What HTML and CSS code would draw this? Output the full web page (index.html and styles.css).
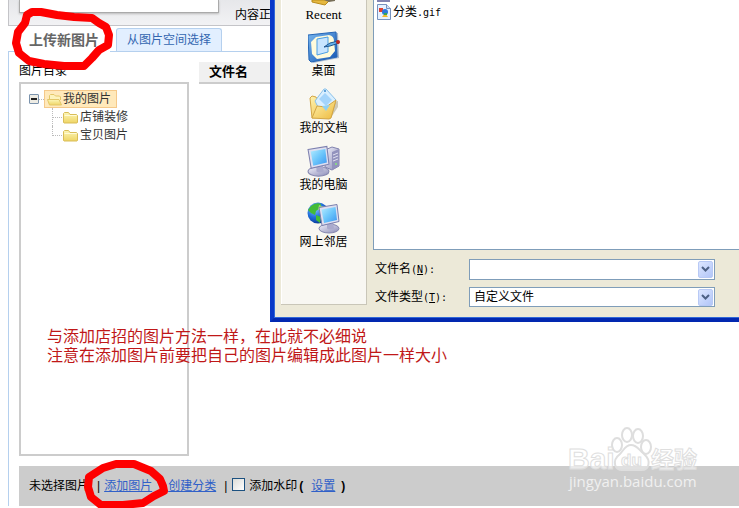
FILE: index.html
```html
<!DOCTYPE html>
<html lang="zh-CN">
<head>
<meta charset="utf-8">
<title>上传新图片</title>
<link rel="stylesheet" href="styles.css">
</head>
<body>
<svg class="defs" width="0" height="0" aria-hidden="true">
  <defs>
    <linearGradient id="folderFill" x1="0" y1="0" x2="0" y2="1"><stop offset="0" stop-color="#fcf6b8"/><stop offset="1" stop-color="#efd565"/></linearGradient>
    <linearGradient id="screenFill" x1="0" y1="0" x2="1" y2="1"><stop offset="0" stop-color="#b5ecff"/><stop offset=".5" stop-color="#6cc6fb"/><stop offset="1" stop-color="#3c96f0"/></linearGradient>
    <linearGradient id="metalFill" x1="0" y1="0" x2="1" y2="1"><stop offset="0" stop-color="#f1f1fa"/><stop offset="1" stop-color="#8b8bb8"/></linearGradient>
    <linearGradient id="goldFill" x1="0" y1="0" x2="1" y2="1"><stop offset="0" stop-color="#fff3b0"/><stop offset="1" stop-color="#edb93c"/></linearGradient>
    <linearGradient id="deskFill" x1="0" y1="0" x2="1" y2="1"><stop offset="0" stop-color="#78b6ee"/><stop offset="1" stop-color="#1456b4"/></linearGradient>
    <radialGradient id="globeFill" cx=".35" cy=".3" r=".8"><stop offset="0" stop-color="#8ac8ff"/><stop offset=".5" stop-color="#2170dc"/><stop offset="1" stop-color="#052f8c"/></radialGradient>
    <symbol id="folder" viewBox="0 0 15 13"><path d="M.5 11.5v-9l1-1h4l1.500 2h6.500l1 1v7l-.5.5H1z" fill="url(#folderFill)" stroke="#d9bd58"/><path d="M1.500 4.500h12" stroke="#fffbd8"/></symbol>
    <symbol id="folderOpen" viewBox="0 0 15 13"><path d="M2.500 11V2.500l1-1h3.500l1.500 1.500h4l1 1V7" fill="#fdf3bd" stroke="#e3c768"/><path d="M.5 6.500h11.500l2.500 5.500H2.500z" fill="url(#folderFill)" stroke="#e3c768"/></symbol>
    <symbol id="monitor" viewBox="0 0 22 30"><ellipse cx="11" cy="25" rx="10" ry="4.500" fill="url(#metalFill)" stroke="#8587b0"/><path d="M9 18l6-1 1 8q-4 2-7 0z" fill="#aaaacd"/><path d="M1 4l18-3 2 17-17 4z" fill="#dedff0" stroke="#7c7fae"/><path d="M3.500 6l14-2.500 1.500 13-13 3z" fill="url(#screenFill)"/></symbol>
  </defs>
</svg>

<div class="page">
  <header class="top">
    <div class="preview"></div>
    <span class="top-text">内容正</span>
  </header>

  <nav class="tabs">
    <a class="tab active" href="#upload">上传新图片</a>
    <a class="tab" href="#space">从图片空间选择</a>
  </nav>

  <main class="panel" id="upload">
    <div class="columns">
      <section class="catalog">
        <h2 class="catalog-title">图片目录</h2>
        <div class="tree">
          <div class="tree-row">
            <button class="toggle" type="button" aria-label="收起"></button>
            <span class="dots"></span>
            <a class="node selected" href="#all"><svg width="15" height="13"><use href="#folderOpen"/></svg>我的图片</a>
          </div>
          <ul class="children">
            <li><span class="branch"></span><a class="node" href="#shop"><svg width="15" height="13"><use href="#folder"/></svg>店铺装修</a></li>
            <li><span class="branch"></span><a class="node" href="#item"><svg width="15" height="13"><use href="#folder"/></svg>宝贝图片</a></li>
          </ul>
        </div>
      </section>
      <table class="files">
        <thead><tr><th>文件名</th></tr></thead>
      </table>
    </div>

    <footer class="actions">
      <span class="status">未选择图片</span>
      <span>|</span>
      <a class="add" href="#add">添加图片</a>
      <a class="create" href="#create">创建分类</a>
      <span class="bar">|</span>
      <input type="checkbox" id="mark">
      <label for="mark">添加水印</label>
      <b>(</b>
      <a class="set" href="#set">设置</a>
      <b>)</b>
      <svg class="watermark" width="140" height="70" viewBox="0 0 140 70">
        <g class="mark-shape">
          <ellipse cx="52" cy="19" rx="5" ry="7"/>
          <ellipse cx="62" cy="9" rx="5" ry="7"/>
          <ellipse cx="73" cy="10" rx="5" ry="7"/>
          <ellipse cx="81" cy="21" rx="5" ry="7"/>
          <path d="M66 19c-6 0-7 5-11 9-9 7-5 17 3 16h17c9 1 12-9 4-16-5-4-7-9-13-9z"/>
        </g>
        <text class="mark-logo" x="3" y="43">Bai</text>
        <text class="mark-du" x="56" y="40">du</text>
        <text class="mark-cn" x="86" y="42">经验</text>
        <text class="mark-url" x="4" y="61">jingyan.baidu.com</text>
      </svg>
    </footer>
  </main>

  <section class="dialog" aria-label="打开文件">
    <nav class="places">
      <a class="place" href="#recent">
        <svg width="32" height="6" viewBox="0 0 32 6"><path d="M4 0v2l13 3 5-5z" fill="#e5b83f" stroke="#b98b1b"/><path d="M16 0l5 2 6-1V0z" fill="#786f58"/></svg>
        <span class="latin">Recent</span>
      </a>
      <a class="place" href="#desktop">
        <svg width="32" height="32" viewBox="0 0 32 32"><path d="M2 5l28-3 1 25-26 5-2-2z" fill="#0d418e" opacity=".35"/><path d="M0 4l28-3 1 25-26 5-2-2z" fill="url(#deskFill)" stroke="#2666b6"/><path d="M8 6l13-2q5 1 5 6l1 10-5 6-13 2-5-5-1-12z" fill="#fffbdc"/><path d="M9 8l11-2v15l-11 3z" fill="#c8e5ff" stroke="#4b9fe4"/><path d="M16 16l6-4 8-2 1 2-9 3z" fill="#66b1ee" stroke="#20568f"/><circle cx="30" cy="11" r="2" fill="#bb2923"/></svg>
        <span>桌面</span>
      </a>
      <a class="place" href="#documents">
        <svg width="32" height="32" viewBox="0 0 32 32"><path d="M5 29l17 2 8-12v-6L14 16z" fill="#8f8460" opacity=".4"/><path d="M2 10l2-2 4 1 2 4 17 2-4 14-19 1z" fill="url(#goldFill)" stroke="#d3a645"/><path d="M7 13l9-12h2l10 11-8 9-10-2z" fill="#d9efff" stroke="#8ac1ea"/><path d="M11 11l6-6 7 7-6 6z" fill="#a3d4fb"/><circle cx="17" cy="3" r="1" fill="#3689cc"/><path d="M4 30l5-12 9 1 10-7-5 18-2 1z" fill="url(#goldFill)" stroke="#d3a645"/><path d="M14 18l8-1-4 6z" fill="#8fd0f2"/></svg>
        <span>我的文档</span>
      </a>
      <a class="place" href="#computer">
        <svg width="34" height="32" viewBox="0 0 34 32"><path d="M18 5l7-3 7 2v17l-7 4-7-3z" fill="url(#metalFill)" stroke="#8182ae"/><path d="M25 7l7-3v17l-7 4z" fill="#9292bd"/><path d="M26 10l5-2M26 13l5-2M26 16l5-2" stroke="#e0e0f0"/><circle cx="29" cy="19" r="1" fill="#86e876"/><use href="#monitor" x="0" y="0" width="23" height="32"/></svg>
        <span>我的电脑</span>
      </a>
      <a class="place" href="#network">
        <svg width="34" height="32" viewBox="0 0 34 32"><circle cx="11" cy="11" r="10.500" fill="url(#globeFill)"/><path d="M4 4q5-4 10-2l-1 4-4 3-1 4-4-2-3-3zM9 13l5 2-1 6-4-3z" fill="#43bb38"/><path d="M12 3l5 2-3 4-3-1z" fill="#a0e66a"/><use href="#monitor" x="11" y="1" width="22" height="31"/></svg>
        <span>网上邻居</span>
      </a>
    </nav>

    <div class="browser">
      <div class="list">
        <div class="cut"></div>
        <a class="file" href="#gif"><svg width="14" height="16" viewBox="0 0 14 16"><path d="M.5.500h9l4 4v11H.5z" fill="#e6f1ff" stroke="#7793bf"/><path d="M9.500.500v4h4" fill="#d1e0f5" stroke="#7793bf"/><path d="M2 4h4v4H2z" fill="#e34131"/><circle cx="8" cy="8" r="3" fill="#2c77dc"/><path d="M5 13l3-4 3 4z" fill="#f2b92c"/><path d="M7 9h3v2H7z" fill="#38a653"/></svg><span>分类<span class="mono">.gif</span></span></a>
      </div>
      <form class="fields">
        <label for="name">文件名<span class="mono">(<u>N</u>):</span></label>
        <div class="combo"><input id="name" type="text"><button class="arrow" type="button" aria-label="展开"><svg width="9" height="7" viewBox="0 0 9 7"><path d="M1 1l3.500 3.500L8 1" /></svg></button></div>
        <label for="type">文件类型<span class="mono">(<u>T</u>):</span></label>
        <div class="combo short"><select id="type"><option>自定义文件</option></select><span class="arrow"><svg width="9" height="7" viewBox="0 0 9 7"><path d="M1 1l3.500 3.500L8 1" /></svg></span></div>
      </form>
    </div>
  </section>

  <p class="note">与添加店招的图片方法一样，在此就不必细说<br>注意在添加图片前要把自己的图片编辑成此图片一样大小</p>

  <svg class="ring ring-tab" width="108" height="74" viewBox="0 0 108 74"><path d="M19 15L24 12 33 12 49 15 66 17 84 18 91 23 98 27 101 35 100 45 91 50 84 58 76 66 56 66 36 64 21 61 11 53 8 43 10 32 17 23z"/></svg>
  <svg class="ring ring-add" width="92" height="50" viewBox="0 0 92 50"><path d="M19 47L9 39 6 29 7 19 21 10 34 6 52 6 69 13 78 21 81 28 82 33 72 38 61 45 41 47z"/></svg>
</div>
</body>
</html>
```
FILE: styles.css
```css
* { box-sizing: border-box; }

body {
  margin: 0;
  background: #fff;
  color: #000;
  font: 12px/18px "Liberation Sans", "Noto Sans CJK SC", sans-serif;
}

a { color: inherit; text-decoration: none; }

.defs { position: absolute; }

.page { position: relative; padding-left: 8px; overflow: hidden; }

/* Upper strip */
.top {
  display: flex;
  gap: 16px;
  height: 26px;
  padding-left: 10px;
  border-left: 1px solid #c4c4c8;
  border-bottom: 1px solid #c4c4c8;
  background: linear-gradient(#e6e7ea, #f2f2f4);
}

.preview {
  width: 200px;
  height: 13px;
  background: #fff;
  border: 1px solid #aaa;
  border-top: 0;
  box-shadow: 0 1px 2px #bbb;
}

.top-text { padding-top: 6px; }

/* Tabs */
.tabs {
  display: flex;
  align-items: flex-end;
  gap: 6px;
  height: 26px;
  padding-left: 10px;
  border-bottom: 1px solid #b5d0ee;
}

.tab {
  height: 23px;
  padding: 0 10px;
  border: 1px solid #b5d0ee;
  border-bottom: 0;
  border-radius: 3px 3px 0 0;
  background: #e2efff;
  color: #3366b0;
  line-height: 23px;
}

.tab.active {
  height: 24px;
  margin-bottom: -1px;
  border-color: #fff;
  background: #fff;
  color: #666;
  font-size: 14px;
  font-weight: bold;
}

/* Catalog and files */
.panel {
  padding: 10px 0 0 10px;
  margin-bottom: 2px;
  border-left: 1px solid #b5d0ee;
}

.columns { display: flex; align-items: flex-start; gap: 10px; }

.catalog { width: 170px; }

.catalog-title { margin: 0 0 2px; font-size: 12px; font-weight: normal; }

.tree {
  height: 374px;
  padding: 6px 8px;
  border: 2px solid #ccc;
  color: #333;
}

.tree-row { display: flex; align-items: center; }

.toggle {
  width: 10px;
  height: 10px;
  padding: 0;
  border: 1px solid #7b93ad;
  border-radius: 1px;
  background: linear-gradient(#222, #222) center / 6px 2px no-repeat, #eeece4;
}

.dots { width: 5px; border-top: 1px dotted #bbb; }

.node { display: flex; align-items: center; gap: 2px; height: 18px; }

.node.selected {
  gap: 1px;
  padding: 0 5px 0 2px;
  border: 1px solid #f5c98a;
  background: #ffe9bb;
}

.children { margin: 0; padding: 0 0 0 23px; list-style: none; }

.children li { display: flex; }

.branch {
  width: 11px;
  height: 18px;
  border-left: 1px dotted #bbb;
  background: linear-gradient(90deg, #bbb 50%, transparent 50%) left center / 2px 1px repeat-x;
}

.children li:last-child .branch { height: 10px; background-position: left bottom; }

.files { flex: 1; border-collapse: collapse; }

.files th {
  height: 21px;
  padding: 0 10px;
  border-bottom: 2px solid #ccc;
  background: #f0f0f0;
  font-size: 13px;
  line-height: 18px;
  text-align: left;
}

/* Bottom actions */
.actions {
  position: relative;
  display: flex;
  align-items: center;
  height: 40px;
  margin-top: 10px;
  padding-left: 10px;
  background: #ccc;
}

.actions a { color: #3060c8; text-decoration: underline; }
.status { margin-right: 8px; }
.add { margin: 0 16px 0 4px; }
.bar { margin: 0 5px 0 8px; }
.actions b { margin: 0 2px; }
.set { margin: 0 4px 0 6px; }

.actions input {
  appearance: none;
  width: 13px;
  height: 13px;
  margin: 0 4px 4px 0;
  border: 1px solid #1c5180;
  background: linear-gradient(135deg, #dcdcd7, #fff);
}

.watermark { position: absolute; right: 34px; bottom: 10px; }

.mark-shape { fill: #fff; fill-opacity: .4; stroke: #dedede; stroke-width: 2; }

.mark-logo, .mark-du, .mark-cn {
  fill: #fff;
  fill-opacity: .6;
  stroke: #dedede;
  font-family: "Liberation Sans", "Noto Sans CJK SC", sans-serif;
  font-weight: bold;
}

.mark-logo { font-size: 30px; }
.mark-du { font-size: 17px; }
.mark-cn { font-size: 23px; }
.mark-url { fill: #f0f0f0; font: 15px "Open Sans", sans-serif; }

/* File dialog floating above the page */
.dialog {
  position: absolute;
  top: 0;
  left: 270px;
  right: 0;
  display: flex;
  gap: 6px;
  padding-left: 7px;
  border-left: 4px solid #0838c8;
  border-bottom: 4px solid #0228b0;
  background: #ece9d8;
  box-shadow: inset 1px -1px #3168d8;
}

.places {
  display: flex;
  flex-direction: column;
  gap: 8px;
  width: 86px;
  margin-bottom: 13px;
  border: 1px solid #c9c6b8;
  border-width: 0 1px 1px 0;
  box-shadow: inset 1px 0 #fff;
  background: #f8f7f2;
}

.place {
  display: flex;
  flex-direction: column;
  align-items: center;
  line-height: 17px;
}

.latin { font: 13px/17px "Liberation Serif", serif; }

.mono { font-family: "DejaVu Sans Mono", monospace; font-size: 10px; }

.browser { flex: 1; }

.list {
  height: 250px;
  padding-left: 3px;
  border: 1px solid #7f9db9;
  border-width: 0 0 1px 1px;
  background: #fff;
}

.cut { width: 13px; height: 2px; margin-bottom: 2px; background: #8284b0; }

.file { display: flex; align-items: center; gap: 2px; height: 16px; }

.fields {
  display: grid;
  grid-template-columns: 94px 1fr;
  row-gap: 7px;
  align-items: center;
  padding: 9px 24px 11px 2px;
}

.combo {
  display: flex;
  align-items: center;
  height: 21px;
  padding-right: 1px;
  border: 1px solid #7f9db9;
  background: #fff;
}

.combo.short { height: 20px; }

.combo input, .combo select {
  flex: 1;
  min-width: 0;
  height: 18px;
  padding: 0 4px;
  border: 0;
  appearance: none;
  background: transparent;
  color: #000;
  font: inherit;
}

.arrow {
  display: flex;
  align-items: center;
  justify-content: center;
  width: 15px;
  height: 17px;
  padding: 0;
  border: 1px solid #b8c9f5;
  border-radius: 2px;
  background: linear-gradient(135deg, #dce6ff, #b2c6f8);
  pointer-events: none;
}

.arrow path { fill: none; stroke: #4d6185; stroke-width: 2; }

/* Annotations drawn over the page */
.note {
  position: absolute;
  top: 327px;
  left: 47px;
  margin: 0;
  color: #c01818;
  font-size: 16px;
  line-height: 19px;
  white-space: nowrap;
}

.ring { position: absolute; fill: none; stroke: #fe0000; stroke-width: 8; stroke-linejoin: round; stroke-linecap: round; }
.ring-tab { top: 0; left: 8px; }
.ring-add { top: 458px; left: 82px; }
```
